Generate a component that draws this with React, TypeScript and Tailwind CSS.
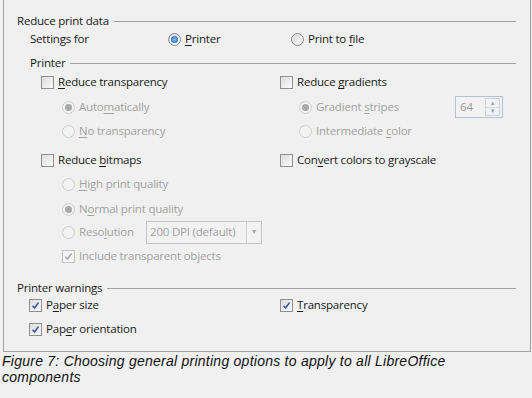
import React from "react";

const Mn = ({ children }: { children: React.ReactNode }) => (
  <span className="underline underline-offset-[2px] decoration-[1px]">{children}</span>
);

const Checkbox = ({ checked = false, disabled = false }: { checked?: boolean; disabled?: boolean }) => (
  <span
    className={`relative inline-flex h-[13px] w-[13px] shrink-0 items-center justify-center border ${
      disabled ? "border-[#c4c4c4] bg-[#f4f4f4]" : "border-[#8e8f8f] bg-gradient-to-br from-[#dcdcdc] to-[#fbfbfb]"
    }`}
  >
    {checked && (
      <svg width="9" height="9" viewBox="0 0 9 9">
        <path
          d="M1.5 4.8 L3.6 7 L7.6 1.5"
          fill="none"
          stroke={disabled ? "#a8a8a8" : "#3d5da8"}
          strokeWidth="1.6"
        />
      </svg>
    )}
  </span>
);

const Radio = ({ checked = false, disabled = false }: { checked?: boolean; disabled?: boolean }) => (
  <span
    className={`inline-flex h-[13px] w-[13px] shrink-0 items-center justify-center rounded-full border ${
      disabled ? "border-[#cfcfcf] bg-[#f3f3f3]" : "border-[#8a8a8a] bg-gradient-to-br from-[#d8d8d8] to-[#fafafa]"
    }`}
  >
    {checked && (
      <span
        className={`h-[7px] w-[7px] rounded-full ${
          disabled ? "bg-[#a9a9a9]" : "bg-radial from-[#7ec3f3] to-[#1a5aa8]"
        }`}
      />
    )}
  </span>
);

const Heading = ({ text, pl }: { text: string; pl: string }) => (
  <div className={`flex h-[18px] items-center ${pl} pr-[14px]`}>
    <span>{text}</span>
    <span className="ml-[5px] h-px flex-1 bg-[#a0a0a0]" />
  </div>
);

const Option = ({
  kind,
  checked,
  disabled,
  children,
}: {
  kind: "check" | "radio";
  checked?: boolean;
  disabled?: boolean;
  children: React.ReactNode;
}) => (
  <div className={`flex items-center gap-[4px] ${disabled ? "text-[#a2a2a2]" : ""}`}>
    {kind === "check" ? <Checkbox checked={checked} disabled={disabled} /> : <Radio checked={checked} disabled={disabled} />}
    <span>{children}</span>
  </div>
);

export default function App() {
  return (
    <div className="h-[398px] w-[532px] overflow-hidden bg-[#f0f0f0] font-['Open_Sans',sans-serif] text-[11.5px] tracking-[-0.2px] text-[#1a1a1a]">
      <div className="ml-[3px] h-[352px] w-[528px] border-x border-b border-[#a0a0a0] pt-[12px]">
        <Heading text="Reduce print data" pl="pl-[13px]" />

        <div className="flex h-[18px] items-center pl-[26px]">
          <span className="w-[138px]">Settings for</span>
          <div className="w-[123px]">
            <Option kind="radio" checked>
              <Mn>P</Mn>rinter
            </Option>
          </div>
          <Option kind="radio">
            Print to <Mn>f</Mn>ile
          </Option>
        </div>

        <div className="mt-[6px]">
          <Heading text="Printer" pl="pl-[26px]" />
        </div>

        <div className="mt-[1px] flex h-[18px] items-center">
          <div className="w-[276px] pl-[37px]">
            <Option kind="check">
              <Mn>R</Mn>educe transparency
            </Option>
          </div>
          <Option kind="check">
            Reduce <Mn>g</Mn>radients
          </Option>
        </div>

        <div className="mt-[7px] flex h-[18px] items-center">
          <div className="w-[276px] pl-[58px]">
            <Option kind="radio" checked disabled>
              Auto<Mn>m</Mn>atically
            </Option>
          </div>
          <div className="w-[175px] pl-[19px]">
            <Option kind="radio" checked disabled>
              Gradient <Mn>s</Mn>tripes
            </Option>
          </div>
          <div className="flex h-[22px] w-[48px] items-center border border-[#b3c2d3] bg-[#f2f2f2] pl-[4px] pr-[2px]">
            <span className="flex-1 text-[#9a9a9a]">64</span>
            <div className="flex h-[18px] w-[15px] flex-col border border-[#c9d2dc]">
              <span className="flex flex-1 items-center justify-center border-b border-[#d6dde5] text-[6px] leading-none text-[#9aa4b0]">▲</span>
              <span className="flex flex-1 items-center justify-center text-[6px] leading-none text-[#9aa4b0]">▼</span>
            </div>
          </div>
        </div>

        <div className="mt-[6px] flex h-[18px] items-center">
          <div className="w-[276px] pl-[58px]">
            <Option kind="radio" disabled>
              <Mn>N</Mn>o transparency
            </Option>
          </div>
          <div className="pl-[19px]">
            <Option kind="radio" disabled>
              Intermediate <Mn>c</Mn>olor
            </Option>
          </div>
        </div>

        <div className="mt-[11px] flex h-[18px] items-center">
          <div className="w-[276px] pl-[37px]">
            <Option kind="check">
              Reduce <Mn>b</Mn>itmaps
            </Option>
          </div>
          <Option kind="check">
            Con<Mn>v</Mn>ert colors to grayscale
          </Option>
        </div>

        <div className="mt-[6px] flex h-[18px] items-center pl-[58px]">
          <Option kind="radio" disabled>
            <Mn>H</Mn>igh print quality
          </Option>
        </div>

        <div className="mt-[7px] flex h-[18px] items-center pl-[58px]">
          <Option kind="radio" checked disabled>
            N<Mn>o</Mn>rmal print quality
          </Option>
        </div>

        <div className="mt-[5px] flex h-[18px] items-center pl-[58px]">
          <div className="w-[84px]">
            <Option kind="radio" disabled>
              Reso<Mn>l</Mn>ution
            </Option>
          </div>
          <div className="flex h-[23px] w-[116px] shrink-0 items-center border border-[#c4c4c4] bg-[#f2f2f2]">
            <span className="flex-1 pl-[3px] text-[#a2a2a2]">200 DPI (default)</span>
            <span className="flex h-full w-[15px] items-center justify-center border-l border-[#d0d0d0] text-[7px] text-[#a8a8a8]">▼</span>
          </div>
        </div>

        <div className="mt-[6px] flex h-[18px] items-center pl-[58px]">
          <Option kind="check" checked disabled>
            Include transparent objects
          </Option>
        </div>

        <div className="mt-[14px]">
          <Heading text="Printer warnings" pl="pl-[13px]" />
        </div>

        <div className="mt-[-1px] flex h-[18px] items-center">
          <div className="w-[276px] pl-[25px]">
            <Option kind="check" checked>
              P<Mn>a</Mn>per size
            </Option>
          </div>
          <Option kind="check" checked>
            <Mn>T</Mn>ransparency
          </Option>
        </div>

        <div className="mt-[6px] flex h-[18px] items-center pl-[25px]">
          <Option kind="check" checked>
            Pap<Mn>e</Mn>r orientation
          </Option>
        </div>
      </div>

      <p className="mt-[1px] pl-[2px] font-['Liberation_Sans',Arial,sans-serif] text-[14px] italic leading-[16px] tracking-[0.25px] text-[#111]">
        Figure 7: Choosing general printing options to apply to all LibreOffice
        <br />
        components
      </p>
    </div>
  );
}
